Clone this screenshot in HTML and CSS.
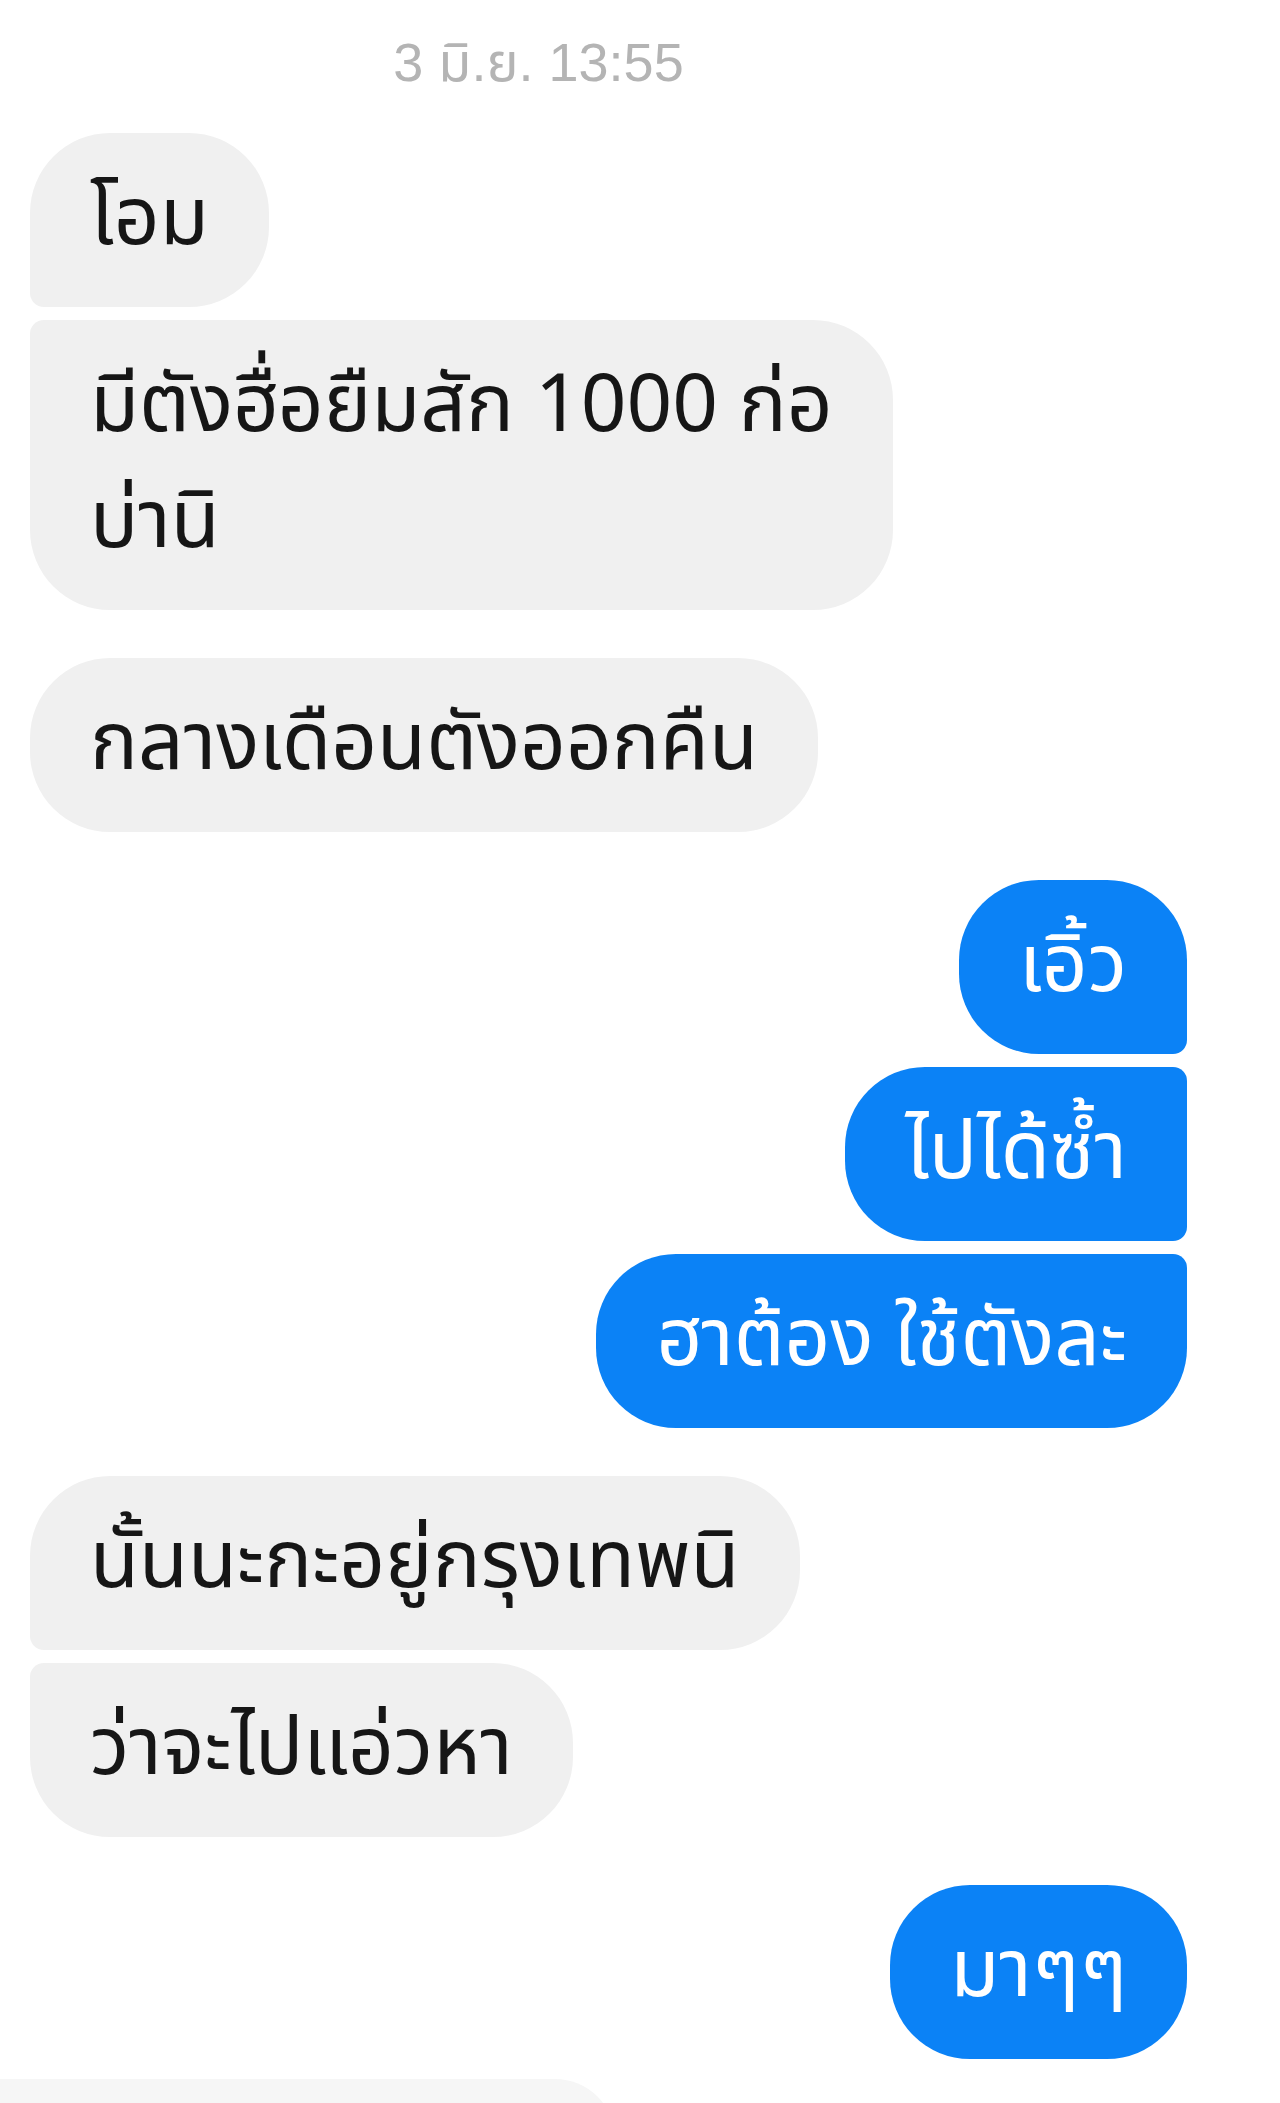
FILE: index.html
```html
<!DOCTYPE html>
<html lang="th">
<head>
    <meta charset="UTF-8">
    <meta name="viewport" content="width=device-width, initial-scale=1.0">
    <title>แชท</title>
    <link rel="stylesheet" href="styles.css">
</head>
<body>
    <div class="chat">
        <div class="time">3 มิ.ย. 13:55</div>

        <div class="group in">
            <div class="msg first">โอม</div>
            <div class="msg last">มีตังฮื่อยืมสัก 1000 ก่อ<br>บ่านิ</div>
        </div>

        <div class="group in">
            <div class="msg">กลางเดือนตังออกคืน</div>
        </div>

        <div class="group out">
            <div class="msg first">เอิ้ว</div>
            <div class="msg mid">ไปได้ซ้ำ</div>
            <div class="msg last">ฮาต้อง ใช้ตังละ</div>
        </div>

        <div class="group in">
            <div class="msg first">นั้นนะกะอยู่กรุงเทพนิ</div>
            <div class="msg last">ว่าจะไปแอ่วหา</div>
        </div>

        <div class="group out">
            <div class="msg">มาๆๆ</div>
        </div>

        <div class="group in tail">
            <div class="msg cut"></div>
        </div>
    </div>
</body>
</html>
```

FILE: styles.css
```css
/* page */
body{
    margin: 0;
    background: #fff;
    font-family: "Noto Sans Thai", "Noto Sans", "Liberation Sans", sans-serif;
}
.chat{
    padding: 0 93px 0 30px;
    height: 2103px;
    overflow: hidden;
}
/* date line */
.time{
    font-family: "Liberation Sans", "Noto Sans Thai", sans-serif;
    font-size: 54px;
    line-height: 62px;
    height: 62px;
    color: #b4b4b4;
    text-align: center;
    padding-right: 140px;
    margin: 31px 0 40px;
}
/* a run of messages from one side */
.group{
    display: flex;
    flex-direction: column;
    gap: 13px;
    margin-bottom: 48px;
}
.group.in{ align-items: flex-start; }
.group.out{ align-items: flex-end; }

.msg{
    font-size: 80px;
    line-height: 116px;
    padding: 29px 60px;
    border-radius: 80px;
}
.in .msg{
    background: #f0f0f0;
    color: #161616;
}
.out .msg{
    background: #0b82f6;
    color: #fff;
}
/* grouped corners */
.in .first{ border-bottom-left-radius: 14px; }
.in .last{ border-top-left-radius: 14px; }
.out .first{ border-bottom-right-radius: 14px; }
.out .mid{ border-top-right-radius: 14px; border-bottom-right-radius: 14px; }
.out .last{ border-top-right-radius: 14px; }

/* next bubble, cut by the bottom edge */
.group.tail{ margin-top: -28px; }
.msg.cut{
    width: 615px;
    height: 100px;
    padding: 0;
    margin-left: -30px;
    border-radius: 0 60px 0 0;
    background: #f6f6f6;
}
```
